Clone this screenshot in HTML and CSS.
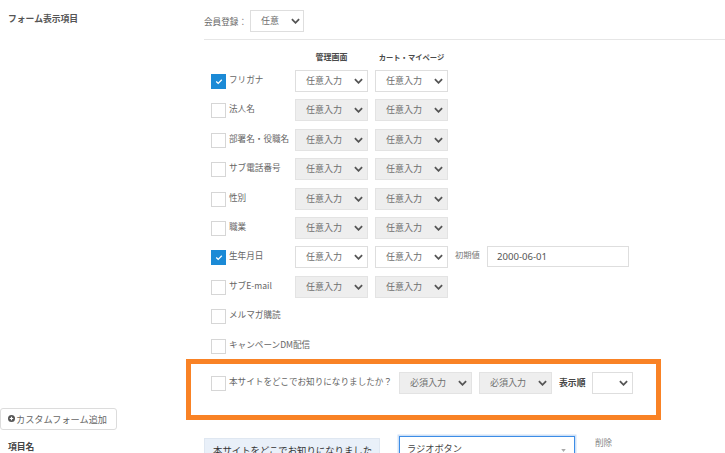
FILE: index.html
```html
<!DOCTYPE html>
<html lang="ja">
<head>
<meta charset="utf-8">
<link rel="stylesheet" href="styles.css">
</head>
<body>
<div class="page">
  <section class="form-section">
    <div class="side-title">フォーム表示項目</div>
    <div class="main">
      <div class="member">
        <span class="member-label">会員登録：</span>
        <div class="sel sel-member"><span>任意</span><svg class="chev" viewBox="0 0 10 6"><path d="M1 1L5 5L9 1"/></svg></div>
      </div>
      <div class="rule"></div>
      <div class="heads"><span class="head">管理画面</span><span class="head head2">カート・マイページ</span></div>
      <div class="rows">
        <div class="row">
          <div class="check"><span class="cb on"><svg viewBox="0 0 10 8"><path d="M1.5 4L4 6.3L8.5 1.8"/></svg></span><span class="lbl">フリガナ</span></div>
          <div class="sel"><span>任意入力</span><svg class="chev" viewBox="0 0 10 6"><path d="M1 1L5 5L9 1"/></svg></div>
          <div class="sel"><span>任意入力</span><svg class="chev" viewBox="0 0 10 6"><path d="M1 1L5 5L9 1"/></svg></div>
        </div>
        <div class="row">
          <div class="check"><span class="cb"></span><span class="lbl">法人名</span></div>
          <div class="sel dis"><span>任意入力</span><svg class="chev" viewBox="0 0 10 6"><path d="M1 1L5 5L9 1"/></svg></div>
          <div class="sel dis"><span>任意入力</span><svg class="chev" viewBox="0 0 10 6"><path d="M1 1L5 5L9 1"/></svg></div>
        </div>
        <div class="row">
          <div class="check"><span class="cb"></span><span class="lbl">部署名・役職名</span></div>
          <div class="sel dis"><span>任意入力</span><svg class="chev" viewBox="0 0 10 6"><path d="M1 1L5 5L9 1"/></svg></div>
          <div class="sel dis"><span>任意入力</span><svg class="chev" viewBox="0 0 10 6"><path d="M1 1L5 5L9 1"/></svg></div>
        </div>
        <div class="row">
          <div class="check"><span class="cb"></span><span class="lbl">サブ電話番号</span></div>
          <div class="sel dis"><span>任意入力</span><svg class="chev" viewBox="0 0 10 6"><path d="M1 1L5 5L9 1"/></svg></div>
          <div class="sel dis"><span>任意入力</span><svg class="chev" viewBox="0 0 10 6"><path d="M1 1L5 5L9 1"/></svg></div>
        </div>
        <div class="row">
          <div class="check"><span class="cb"></span><span class="lbl">性別</span></div>
          <div class="sel dis"><span>任意入力</span><svg class="chev" viewBox="0 0 10 6"><path d="M1 1L5 5L9 1"/></svg></div>
          <div class="sel dis"><span>任意入力</span><svg class="chev" viewBox="0 0 10 6"><path d="M1 1L5 5L9 1"/></svg></div>
        </div>
        <div class="row">
          <div class="check"><span class="cb"></span><span class="lbl">職業</span></div>
          <div class="sel dis"><span>任意入力</span><svg class="chev" viewBox="0 0 10 6"><path d="M1 1L5 5L9 1"/></svg></div>
          <div class="sel dis"><span>任意入力</span><svg class="chev" viewBox="0 0 10 6"><path d="M1 1L5 5L9 1"/></svg></div>
        </div>
        <div class="row">
          <div class="check"><span class="cb on"><svg viewBox="0 0 10 8"><path d="M1.5 4L4 6.3L8.5 1.8"/></svg></span><span class="lbl">生年月日</span></div>
          <div class="sel"><span>任意入力</span><svg class="chev" viewBox="0 0 10 6"><path d="M1 1L5 5L9 1"/></svg></div>
          <div class="sel"><span>任意入力</span><svg class="chev" viewBox="0 0 10 6"><path d="M1 1L5 5L9 1"/></svg></div>
          <span class="init-lbl">初期値</span>
          <div class="input">2000-06-01</div>
        </div>
        <div class="row">
          <div class="check"><span class="cb"></span><span class="lbl">サブE-mail</span></div>
          <div class="sel dis"><span>任意入力</span><svg class="chev" viewBox="0 0 10 6"><path d="M1 1L5 5L9 1"/></svg></div>
          <div class="sel dis"><span>任意入力</span><svg class="chev" viewBox="0 0 10 6"><path d="M1 1L5 5L9 1"/></svg></div>
        </div>
        <div class="row">
          <div class="check"><span class="cb"></span><span class="lbl">メルマガ購読</span></div>
        </div>
        <div class="row">
          <div class="check"><span class="cb"></span><span class="lbl">キャンペーンDM配信</span></div>
        </div>
        <div class="row highlight">
          <div class="check check-auto"><span class="cb"></span><span class="lbl">本サイトをどこでお知りになりましたか？</span></div>
          <div class="sel dis"><span>必須入力</span><svg class="chev" viewBox="0 0 10 6"><path d="M1 1L5 5L9 1"/></svg></div>
          <div class="sel dis"><span>必須入力</span><svg class="chev" viewBox="0 0 10 6"><path d="M1 1L5 5L9 1"/></svg></div>
          <span class="order-lbl">表示順</span>
          <div class="sel sel-order"><span></span><svg class="chev" viewBox="0 0 10 6"><path d="M1 1L5 5L9 1"/></svg></div>
        </div>
      </div>
    </div>
  </section>
  <div class="add-row">
    <div class="add-btn"><svg class="plus" viewBox="0 0 8 8"><circle cx="4" cy="4" r="4"/><path d="M4 2V6M2 4H6"/></svg><span>カスタムフォーム追加</span></div>
  </div>
  <section class="item-section">
    <div class="side-title item-title">項目名</div>
    <div class="item-main">
      <div class="item-name">本サイトをどこでお知りになりました</div>
      <div class="type-sel"><span>ラジオボタン</span><svg class="tri" viewBox="0 0 6 4"><path d="M0 0H6L3 4Z"/></svg></div>
      <span class="del">削除</span>
    </div>
  </section>
</div>
</body>
</html>
```

FILE: styles.css
```css
* {
  box-sizing: border-box;
  margin: 0;
  padding: 0;
}

body {
  margin: 0;
  background: #fff;
  font-family: "Noto Sans CJK JP", "Noto Sans", sans-serif;
  color: #666;
}

.page {
  width: 725px;
  height: 453px;
  overflow: hidden;
}

.form-section {
  display: grid;
  grid-template-columns: 204px 1fr;
}

.side-title {
  font-size: 8.8px;
  font-weight: bold;
  color: #555;
  line-height: 12px;
  padding: 13px 0 0 8px;
  white-space: nowrap;
}

.main {
  display: flex;
  flex-direction: column;
}

.member {
  display: flex;
  align-items: center;
  gap: 3px;
  margin-top: 10px;
  height: 22px;
}

.member-label {
  font-size: 8.6px;
  color: #6a6a6a;
  line-height: 12px;
}

.sel {
  display: flex;
  align-items: center;
  justify-content: space-between;
  flex: none;
  width: 73px;
  height: 22px;
  border: 1px solid #dedede;
  background: #fff;
  padding: 0 4px 0 10px;
  font-size: 9px;
  line-height: 12px;
  color: #6e6e6e;
  white-space: nowrap;
}

.sel.dis {
  background: #eeeeee;
  border-color: #e3e3e3;
}

.sel-member {
  width: 54px;
  padding-right: 3px;
}

.sel-order {
  width: 41px;
  padding-right: 4px;
}

.chev {
  width: 9px;
  height: 6px;
  flex: none;
}

.chev path {
  fill: none;
  stroke: #555;
  stroke-width: 2;
}

.rule {
  border-top: 1px solid #e6e6e6;
  margin-top: 7px;
}

.heads {
  display: flex;
  gap: 7px;
  padding-left: 91px;
  margin-top: 11.5px;
  height: 10px;
}

.head {
  width: 73px;
  text-align: center;
  font-size: 8px;
  font-weight: bold;
  color: #4a4a4a;
  line-height: 10px;
  white-space: nowrap;
}

.head2 {
  font-size: 7.3px;
}

.rows {
  display: flex;
  flex-direction: column;
  gap: 7.4px;
  margin-top: 8.5px;
  padding-left: 7px;
}

.row {
  display: flex;
  align-items: flex-start;
  height: 22px;
  gap: 7px;
}

.check {
  display: flex;
  align-items: flex-start;
  gap: 3px;
  width: 77px;
  flex: none;
}

.check-auto {
  width: auto;
}

.cb {
  display: flex;
  align-items: center;
  justify-content: center;
  width: 15px;
  height: 15px;
  margin-top: 4px;
  border: 1px solid #d6d6d6;
  background: #fff;
  flex: none;
}

.cb.on {
  background: #1b8ad6;
  border-color: #1b8ad6;
}

.cb svg {
  width: 8px;
  height: 7px;
}

.cb svg path {
  fill: none;
  stroke: #fff;
  stroke-width: 1.6;
}

.lbl {
  font-size: 8.6px;
  line-height: 12px;
  margin-top: 3px;
  white-space: nowrap;
  color: #666;
}

.init-lbl {
  font-size: 8.3px;
  line-height: 12px;
  width: 25px;
  margin-top: 2px;
  color: #777;
  white-space: nowrap;
}

.input {
  width: 142px;
  height: 21px;
  border: 1px solid #dedede;
  background: #fff;
  padding-left: 9px;
  font-size: 9.6px;
  line-height: 19px;
  color: #555;
  font-family: "Noto Sans", sans-serif;
}

.highlight {
  position: relative;
  margin-top: 8px;
}

.highlight::before {
  content: "";
  position: absolute;
  left: -25px;
  top: -13px;
  width: 465px;
  height: 51px;
  border: 5px solid #f98225;
}

.order-lbl {
  font-size: 8.8px;
  font-weight: bold;
  line-height: 12px;
  margin-top: 5px;
  color: #444;
  white-space: nowrap;
}

.add-row {
  margin-top: 14px;
  display: flex;
}

.add-btn {
  display: flex;
  align-items: center;
  gap: 1px;
  width: 117px;
  height: 22px;
  border: 1px solid #dcdcdc;
  border-radius: 3px;
  background: #fff;
  padding-left: 7px;
  font-size: 9.2px;
  line-height: 12px;
  color: #666;
  white-space: nowrap;
}

.plus {
  width: 7px;
  height: 7px;
  flex: none;
}

.plus circle {
  fill: #555;
}

.plus path {
  stroke: #fff;
  stroke-width: 1.4;
}

.item-section {
  display: grid;
  grid-template-columns: 204px 1fr;
  margin-top: 6px;
}

.item-title {
  padding-top: 5px;
  color: #444;
}

.item-main {
  display: flex;
  align-items: flex-start;
}

.item-name {
  width: 176px;
  height: 26px;
  margin-top: 2px;
  background: #e9f0f9;
  border: 1px solid #dfe7f1;
  padding: 5px 0 0 8px;
  font-size: 9.4px;
  line-height: 12px;
  color: #333;
  white-space: nowrap;
}

.type-sel {
  display: flex;
  align-items: flex-start;
  justify-content: space-between;
  width: 176px;
  height: 26px;
  margin-left: 19px;
  border: 1px solid #3d8de6;
  box-shadow: 0 0 0 1.5px #cfe1f7;
  background: #fff;
  padding: 5px 8px 0 7px;
  font-size: 9.2px;
  line-height: 12px;
  color: #444;
  white-space: nowrap;
}

.tri {
  width: 5px;
  height: 3px;
  margin-top: 7px;
}

.tri path {
  fill: #aaa;
}

.del {
  margin-left: 20px;
  font-size: 8.6px;
  line-height: 12px;
  color: #888;
  white-space: nowrap;
}
```
